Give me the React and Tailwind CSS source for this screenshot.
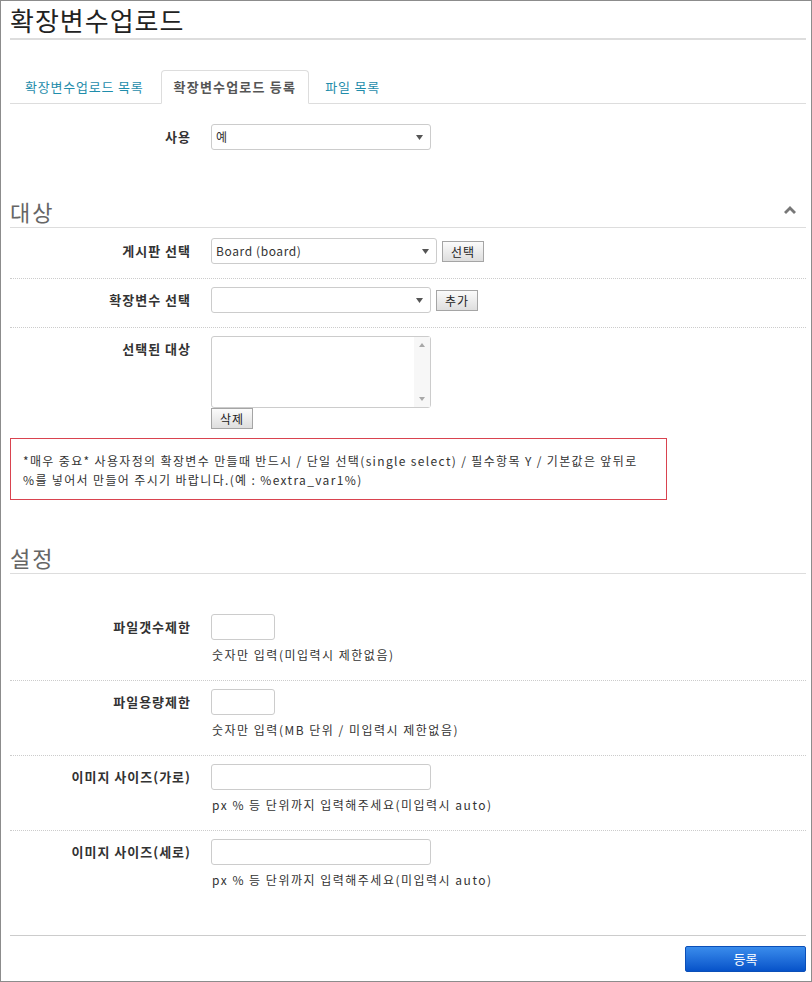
import React from "react";

const Arrow = () => (
  <svg width="7" height="5" viewBox="0 0 7 5" className="absolute right-[7px] top-[10px]">
    <path d="M0 0h7L3.5 5z" fill="#555" />
  </svg>
);

const FakeSelect = ({ value, className }) => (
  <div className={`relative h-[26px] rounded-[3px] border border-[#ccc] bg-white pl-[4px] text-[12px] leading-[24px] tracking-[0.6px] text-[#333] ${className}`}>
    {value}
    <Arrow />
  </div>
);

const SmallButton = ({ children, className }) => (
  <button className={`h-[21px] border border-[#a5a5a5] bg-gradient-to-b from-[#fbfbfb] to-[#dedede] px-[8px] text-[12px] leading-[19px] tracking-[1px] text-[#222] ${className}`}>
    {children}
  </button>
);

const Label = ({ children }) => (
  <div className="w-[181px] shrink-0 text-right text-[13px] font-bold leading-[26px] tracking-[1px] text-[#333]">
    {children}
  </div>
);

const Help = ({ children }) => (
  <p className="mt-[6px] pl-[1px] text-[12px] leading-[18px] tracking-[1.5px] text-[#333]">{children}</p>
);

const SectionTitle = ({ title, chevron }) => (
  <div className="flex items-center justify-between border-b border-[#ddd] pb-[2px] pr-[10px]">
    <h2 className="text-[22px] leading-[28px] tracking-[2px] text-[#666]">{title}</h2>
    {chevron && (
      <svg width="12" height="8" viewBox="0 0 12 8" className="-mt-[3px]">
        <path d="M0 6 6 0l6 6-2 2-4-4-4 4z" fill="#777" />
      </svg>
    )}
  </div>
);

export default function App() {
  return (
    <div className="h-[982px] w-[812px] border border-[#8c8c8c] bg-white pl-[9px] pr-[5px] font-['Noto_Sans_CJK_KR','Noto_Sans',sans-serif] text-[#333]">
      {/* page title */}
      <h1 className="border-b-2 border-[#ddd] pb-[2px] pt-[3px] text-[26px] leading-[32px] tracking-[1px] text-[#222]">
        확장변수업로드
      </h1>

      {/* tabs */}
      <div className="mt-[30px] flex border-b border-[#ddd] text-[13px]">
        <a className="mr-[2px] h-[33px] px-[15px] leading-[33px] tracking-[0.8px] text-[#1f8dab]">확장변수업로드 목록</a>
        <a className="-mb-px mr-[2px] h-[34px] rounded-t-[4px] border border-[#ddd] border-b-white bg-white px-[12px] leading-[32px] font-bold tracking-[1.2px] text-[#555]">
          확장변수업로드 등록
        </a>
        <a className="h-[33px] px-[14px] leading-[33px] tracking-[0.8px] text-[#1f8dab]">파일 목록</a>
      </div>

      <div className="mt-[20px] flex">
        <Label>사용</Label>
        <div className="ml-[20px]">
          <FakeSelect value="예" className="w-[220px]" />
        </div>
      </div>

      {/* 대상 */}
      <div className="mt-[47px]">
        <SectionTitle title="대상" chevron />
      </div>

      <div className="flex border-b border-dotted border-[#ccc] pb-[14px] pt-[10px]">
        <Label>게시판 선택</Label>
        <div className="ml-[20px] flex items-center gap-[5px]">
          <FakeSelect value="Board (board)" className="w-[226px]" />
          <SmallButton>선택</SmallButton>
        </div>
      </div>

      <div className="flex border-b border-dotted border-[#ccc] pb-[14px] pt-[8px]">
        <Label>확장변수 선택</Label>
        <div className="ml-[20px] flex items-center gap-[5px]">
          <FakeSelect value="" className="w-[220px]" />
          <SmallButton>추가</SmallButton>
        </div>
      </div>

      <div className="flex pt-[8px]">
        <Label>선택된 대상</Label>
        <div className="ml-[20px] flex flex-col items-start">
          <div className="flex h-[72px] w-[220px] justify-end rounded-[3px] border border-[#ccc] bg-white">
            <div className="flex w-[16px] flex-col items-center justify-between bg-[#f7f7f7] py-[6px]">
              <svg width="6" height="4" viewBox="0 0 6 4"><path d="M0 4 3 0l3 4z" fill="#a8a8a8" /></svg>
              <svg width="6" height="4" viewBox="0 0 6 4"><path d="M0 0h6L3 4z" fill="#a8a8a8" /></svg>
            </div>
          </div>
          <SmallButton>삭제</SmallButton>
        </div>
      </div>

      <div className="mt-[9px] w-[657px] border border-[#d9434f] pb-[10px] pl-[12px] pt-[12px] text-[12px] leading-[19px] tracking-[1.35px] text-[#333]">
        <p>*매우 중요* 사용자정의 확장변수 만들때 반드시 / 단일 선택(single select) / 필수항목 Y / 기본값은 앞뒤로</p>
        <p>%를 넣어서 만들어 주시기 바랍니다.(예 : %extra_var1%)</p>
      </div>

      {/* 설정 */}
      <div className="mt-[43px]">
        <SectionTitle title="설정" />
      </div>

      <div className="flex border-b border-dotted border-[#ccc] pb-[16px] pt-[40px]">
        <Label>파일갯수제한</Label>
        <div className="ml-[20px]">
          <input className="h-[26px] w-[64px] rounded-[3px] border border-[#ccc]" />
          <Help>숫자만 입력(미입력시 제한없음)</Help>
        </div>
      </div>

      <div className="flex border-b border-dotted border-[#ccc] pb-[16px] pt-[8px]">
        <Label>파일용량제한</Label>
        <div className="ml-[20px]">
          <input className="h-[26px] w-[64px] rounded-[3px] border border-[#ccc]" />
          <Help>숫자만 입력(MB 단위 / 미입력시 제한없음)</Help>
        </div>
      </div>

      <div className="flex border-b border-dotted border-[#ccc] pb-[16px] pt-[8px]">
        <Label>이미지 사이즈(가로)</Label>
        <div className="ml-[20px]">
          <input className="h-[26px] w-[220px] rounded-[3px] border border-[#ccc]" />
          <Help>px % 등 단위까지 입력해주세요(미입력시 auto)</Help>
        </div>
      </div>

      <div className="flex pb-[46px] pt-[8px]">
        <Label>이미지 사이즈(세로)</Label>
        <div className="ml-[20px]">
          <input className="h-[26px] w-[220px] rounded-[3px] border border-[#ccc]" />
          <Help>px % 등 단위까지 입력해주세요(미입력시 auto)</Help>
        </div>
      </div>

      <div className="flex justify-end border-t border-[#ccc] pt-[10px]">
        <button className="h-[26px] w-[121px] rounded-[2px] border border-[#0b4fb8] bg-gradient-to-b from-[#3a8cec] to-[#0652c9] text-[13px] text-white">
          등록
        </button>
      </div>
    </div>
  );
}
